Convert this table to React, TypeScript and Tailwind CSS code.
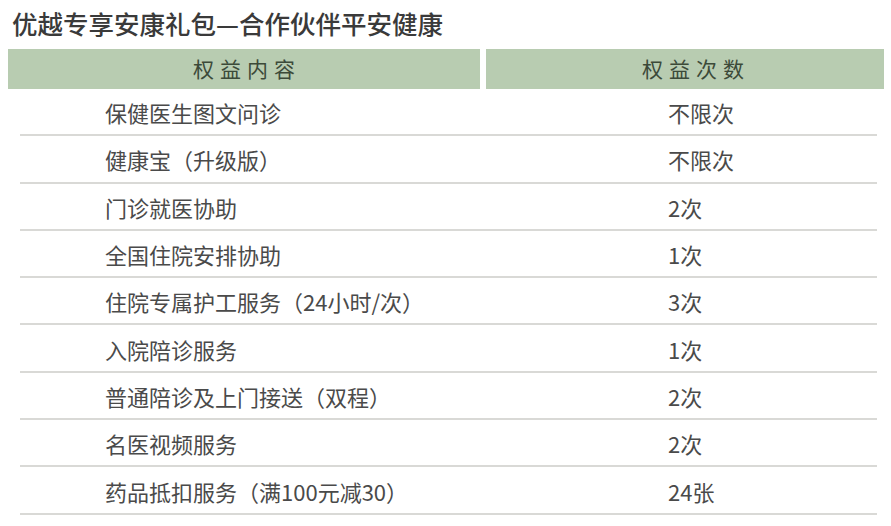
const rows: [string, string][] = [
  ["保健医生图文问诊", "不限次"],
  ["健康宝（升级版）", "不限次"],
  ["门诊就医协助", "2次"],
  ["全国住院安排协助", "1次"],
  ["住院专属护工服务（24小时/次）", "3次"],
  ["入院陪诊服务", "1次"],
  ["普通陪诊及上门接送（双程）", "2次"],
  ["名医视频服务", "2次"],
  ["药品抵扣服务（满100元减30）", "24张"],
];

const font = { fontFamily: '"Noto Sans CJK SC", "Noto Sans", sans-serif' };

export default function App() {
  return (
    <div className="h-[526px] w-[891px] overflow-hidden bg-white" style={font}>
      <h1 className="flex h-[49px] items-center pl-[12px] pb-[4px] text-[25.5px] font-medium leading-none text-[#3a3a3a]">
        优越专享安康礼包—合作伙伴平安健康
      </h1>

      <div className="ml-[8px] flex h-[40px] w-[876px] gap-[6px]">
        <div className="flex w-[472px] items-center justify-center bg-[#b8ccb1] pl-[6px] text-[21px] tracking-[6px] text-[#3c4a39]">
          权益内容
        </div>
        <div className="flex flex-1 items-center justify-center bg-[#b8ccb1] pl-[22px] text-[21px] tracking-[6px] text-[#3c4a39]">
          权益次数
        </div>
      </div>

      <div className="ml-[20px] w-[857px]">
        {rows.map(([name, count]) => (
          <div
            key={name}
            className="flex h-[47.3px] items-center border-b-2 border-[#d9d9d6] text-[22px] leading-none text-[#4a4a4a]"
          >
            <div className="w-[466px] pl-[85px] pt-[1px]">{name}</div>
            <div className="pl-[182px] pt-[1px]">{count}</div>
          </div>
        ))}
      </div>
    </div>
  );
}
